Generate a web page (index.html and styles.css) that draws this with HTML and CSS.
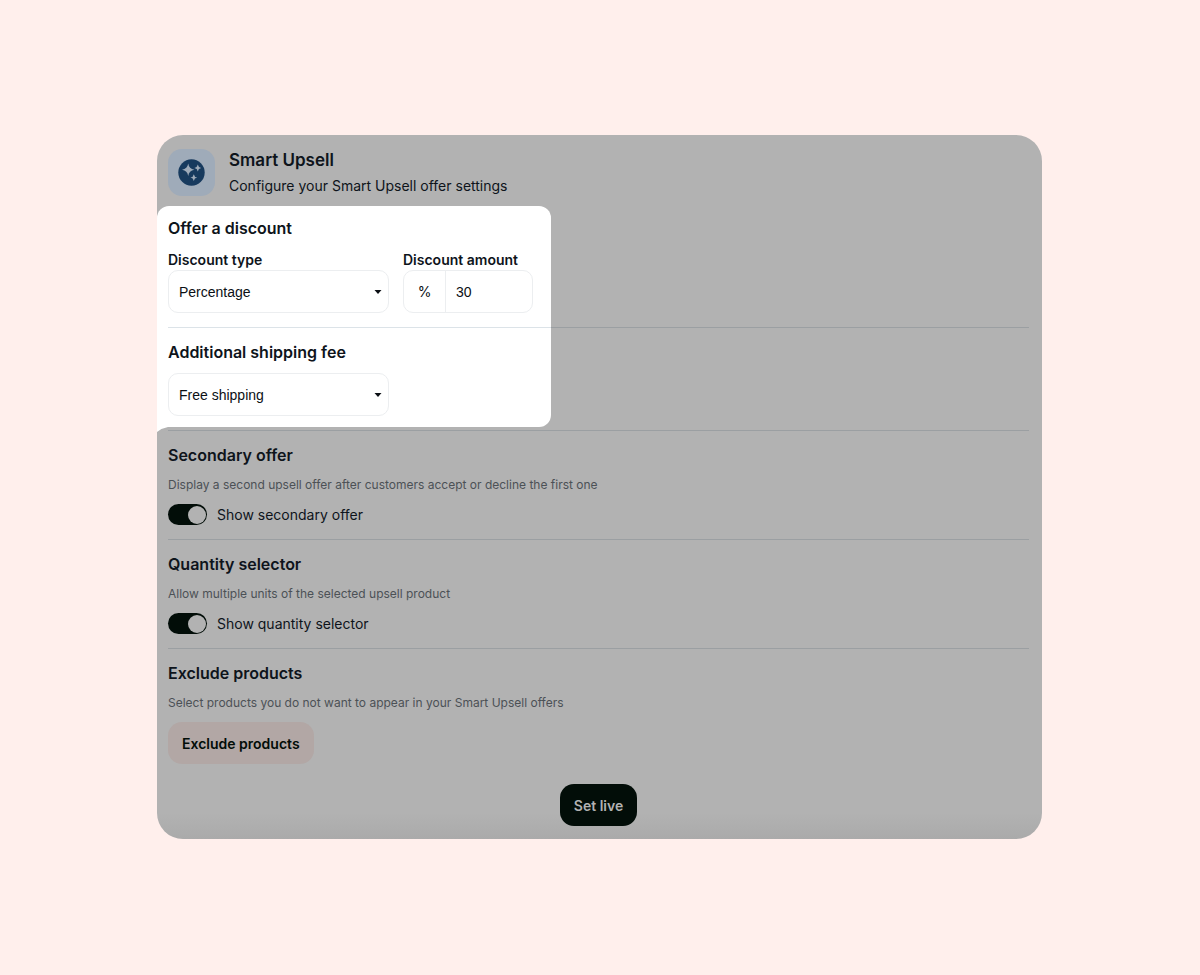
FILE: index.html
```html
<!DOCTYPE html>
<html lang="en">
<head>
<meta charset="utf-8">
<meta name="viewport" content="width=device-width, initial-scale=1">
<title>Smart Upsell</title>
<link rel="stylesheet" href="styles.css">
</head>
<body>
<main class="page">
  <form class="panel">
    <header class="header">
      <span class="header-icon">
        <svg width="27" height="27" viewBox="0 0 27 27" aria-hidden="true">
          <circle cx="13.5" cy="13.5" r="13.2" fill="#173a5e"/>
          <g fill="#9fabb9">
            <path d="M10.2 4.6Q11 10 16.4 10.8Q11 11.600 10.200 17Q9.400 11.600 4 10.800Q9.400 10 10.200 4.600Z"/>
            <path d="M19.800 5.600Q20.300 8.500 23.200 9Q20.300 9.500 19.800 12.400Q19.300 9.500 16.400 9Q19.300 8.500 19.800 5.600Z"/>
            <path d="M15.800 15.200Q16.300 18.100 19.200 18.600Q16.300 19.100 15.800 22Q15.300 19.100 12.400 18.600Q15.300 18.100 15.800 15.200Z"/>
          </g>
        </svg>
      </span>
      <div>
        <h1 class="title">Smart Upsell</h1>
        <p class="subtitle">Configure your Smart Upsell offer settings</p>
      </div>
    </header>

    <div class="spotlight">
      <section class="section">
        <h2 class="heading">Offer a discount</h2>
        <div class="fields">
          <div class="field">
            <label class="label" for="type">Discount type</label>
            <div class="select-box">
              <select class="select" id="type"><option>Percentage</option></select>
              <svg class="caret" width="8" height="4" viewBox="0 0 8 4" aria-hidden="true"><path d="M0.500 0H7.500L4 4Z" fill="#0b0f14"/></svg>
            </div>
          </div>
          <div class="field">
            <label class="label" for="amount">Discount amount</label>
            <div class="amount-box">
              <span class="unit">%</span>
              <input class="amount" id="amount" type="text" value="30">
            </div>
          </div>
        </div>
      </section>
      <section class="section">
        <h2 class="heading" id="shipping">Additional shipping fee</h2>
        <div class="select-box shipping-box">
          <select class="select" aria-labelledby="shipping"><option>Free shipping</option></select>
          <svg class="caret" width="8" height="4" viewBox="0 0 8 4" aria-hidden="true"><path d="M0.500 0H7.500L4 4Z" fill="#0b0f14"/></svg>
        </div>
      </section>
    </div>

    <section class="section">
      <h2 class="heading">Secondary offer</h2>
      <p class="hint">Display a second upsell offer after customers accept or decline the first one</p>
      <label class="toggle-row"><input class="toggle" type="checkbox" checked>Show secondary offer</label>
    </section>
    <section class="section">
      <h2 class="heading">Quantity selector</h2>
      <p class="hint">Allow multiple units of the selected upsell product</p>
      <label class="toggle-row"><input class="toggle" type="checkbox" checked>Show quantity selector</label>
    </section>
    <section class="section last">
      <h2 class="heading">Exclude products</h2>
      <p class="hint">Select products you do not want to appear in your Smart Upsell offers</p>
      <button class="button soft" type="button">Exclude products</button>
    </section>

    <footer class="footer">
      <button class="button primary" type="button">Set live</button>
    </footer>
  </form>
</main>
</body>
</html>
```

FILE: styles.css
```css
* {
  box-sizing: border-box;
}

body {
  margin: 0;
  background: #ffefec;
  color: #0e141b;
  font-family: Inter, "Liberation Sans", sans-serif;
  font-size: 14px;
}

h1, h2, p {
  margin: 0;
}

.page {
  padding: 135px 158px 136px 157px;
}

.panel {
  padding: 14px 13px 13px 11px;
  border-radius: 26px;
  background: linear-gradient(to top, #aaaaaa, #b2b2b2 26px);
}

.header {
  display: flex;
  gap: 14px;
  margin-bottom: 7px;
}

.header-icon {
  display: flex;
  align-items: center;
  justify-content: center;
  width: 47px;
  height: 47px;
  border-radius: 14px;
  background: #9fabb9;
}

.title {
  font-size: 17px;
  font-weight: 600;
  line-height: 22px;
}

.subtitle {
  margin-top: 4px;
  line-height: 22px;
}

.spotlight {
  position: relative;
  z-index: 0;
}

.spotlight::before {
  content: "";
  position: absolute;
  z-index: -1;
  top: 2px;
  bottom: 4px;
  left: -11px;
  width: 394px;
  border-radius: 12px 12px 12px 0;
  background: #ffffff;
}

.spotlight::after {
  content: "";
  position: absolute;
  z-index: -1;
  bottom: -1px;
  left: -11px;
  width: 11px;
  height: 5px;
  background: #ffffff;
  clip-path: polygon(0 0, 100% 0, 40% 40%, 0 100%);
}

.section {
  padding: 14px 0;
  border-bottom: 1px solid #9b9fa2;
}

.spotlight .section:first-child {
  border-image: linear-gradient(to right, #dce3e8 383px, #9b9fa2 383px) 1;
}

.section.last {
  padding-bottom: 0;
  border-bottom: 0;
}

.heading {
  font-size: 16px;
  font-weight: 600;
  line-height: 20px;
}

.fields {
  display: flex;
  gap: 14px;
  margin-top: 12px;
}

.label {
  display: block;
  font-weight: 600;
  line-height: 20px;
}

.select-box {
  position: relative;
  width: 221px;
}

.shipping-box {
  margin-top: 11px;
}

.select,
.amount-box {
  height: 43px;
  border: 1px solid #eceef0;
  border-radius: 10px;
  background: #ffffff;
  color: #0b0f14;
}

.select {
  display: block;
  width: 100%;
  padding: 0 10px;
  appearance: none;
  font: 14px "Liberation Sans", sans-serif;
}

.caret {
  position: absolute;
  top: 20px;
  right: 7px;
  pointer-events: none;
}

.amount-box {
  display: flex;
  width: 130px;
  overflow: hidden;
}

.unit {
  display: flex;
  flex: none;
  align-items: center;
  justify-content: center;
  width: 42px;
  border-right: 1px solid #eceef0;
}

.amount {
  width: 100%;
  min-width: 0;
  padding: 0 10px;
  border: 0;
  background: transparent;
  color: inherit;
  font: 14px "Liberation Sans", sans-serif;
}

.hint {
  margin: 11px 0 10px;
  color: #4c5156;
  font-size: 12px;
  line-height: 18px;
}

.toggle-row {
  display: flex;
  align-items: center;
  gap: 10px;
  line-height: 21px;
}

.toggle {
  display: flex;
  align-items: center;
  justify-content: flex-end;
  width: 39px;
  height: 21px;
  margin: 0;
  padding-right: 1px;
  border-radius: 11px;
  appearance: none;
  background: #020d08;
}

.toggle::before {
  content: "";
  width: 18px;
  height: 18px;
  border-radius: 50%;
  background: #b2b2b2;
}

.toggle:not(:checked) {
  justify-content: flex-start;
  padding: 0 0 0 1px;
}

.button {
  height: 42px;
  padding: 0 14px;
  border: 0;
  border-radius: 14px;
  font: 600 14px Inter, "Liberation Sans", sans-serif;
}

.soft {
  background: #b2a7a5;
  color: #020d08;
}

.primary {
  background: #020d08;
  color: #b2b2b2;
}

.footer {
  display: flex;
  justify-content: center;
  margin-top: 20px;
}
```
